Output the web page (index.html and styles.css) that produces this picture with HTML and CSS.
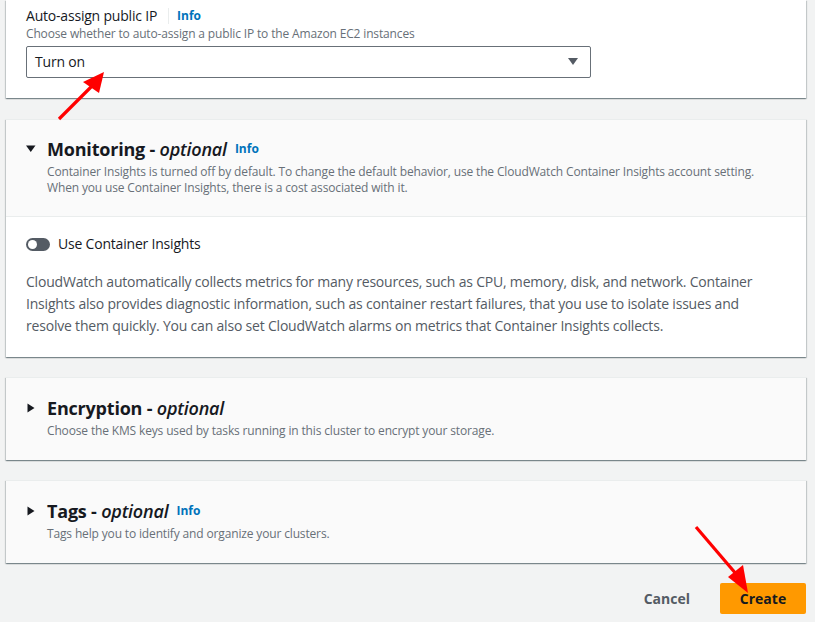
FILE: index.html
```html
<!DOCTYPE html>
<html lang="en">
<head>
<meta charset="utf-8">
<title>Create cluster</title>
<link rel="stylesheet" href="styles.css">
</head>
<body>
<div class="page">
  <section class="card card-top">
    <div class="field-label">
      <span>Auto-assign public IP</span>
      <span class="sep"></span>
      <a class="info">Info</a>
    </div>
    <div class="field-desc">Choose whether to auto-assign a public IP to the Amazon EC2 instances</div>
    <div class="select">
      <span>Turn on</span>
      <svg class="caret" width="10" height="8" viewBox="0 0 10 8"><path d="M0 0H10L5 7Z" fill="#545b64"/></svg>
    </div>
  </section>

  <section class="card">
    <header class="card-head bordered">
      <div class="title-row">
        <svg class="tri" width="10" height="8" viewBox="0 0 10 8"><path d="M0 0.5H9.5L4.75 7Z" fill="#16191f"/></svg>
        <h2 class="title">Monitoring - <i>optional</i></h2>
        <a class="info">Info</a>
      </div>
      <p class="head-desc">Container Insights is turned off by default. To change the default behavior, use the CloudWatch Container Insights account setting. When you use Container Insights, there is a cost associated with it.</p>
    </header>
    <div class="card-body">
      <div class="toggle-row">
        <span class="toggle"><span class="knob"></span></span>
        <span>Use Container Insights</span>
      </div>
      <p class="body-text">CloudWatch automatically collects metrics for many resources, such as CPU, memory, disk, and network. Container Insights also provides diagnostic information, such as container restart failures, that you use to isolate issues and resolve them quickly. You can also set CloudWatch alarms on metrics that Container Insights collects.</p>
    </div>
  </section>

  <section class="card">
    <header class="card-head collapsed">
      <div class="title-row">
        <svg class="tri" width="10" height="10" viewBox="0 0 10 10"><path d="M1.5 0.5V9.5L8.5 5Z" fill="#16191f"/></svg>
        <h2 class="title">Encryption - <i>optional</i></h2>
      </div>
      <p class="head-desc">Choose the KMS keys used by tasks running in this cluster to encrypt your storage.</p>
    </header>
  </section>

  <section class="card">
    <header class="card-head collapsed">
      <div class="title-row">
        <svg class="tri" width="10" height="10" viewBox="0 0 10 10"><path d="M1.5 0.5V9.5L8.5 5Z" fill="#16191f"/></svg>
        <h2 class="title">Tags - <i>optional</i></h2>
        <a class="info">Info</a>
      </div>
      <p class="head-desc">Tags help you to identify and organize your clusters.</p>
    </header>
  </section>

  <div class="actions">
    <button class="btn-link">Cancel</button>
    <button class="btn-primary">Create</button>
  </div>
</div>

<svg class="annotations" width="815" height="622" viewBox="0 0 815 622">
  <g stroke="#ff0000" stroke-width="3.2" stroke-linecap="butt">
    <line x1="59" y1="119" x2="92" y2="86"/>
    <line x1="696" y1="527" x2="737" y2="575"/>
  </g>
  <g fill="#ff0000">
    <path d="M104 72 L83 82 L99 93 Z"/>
    <path d="M748 593 L728 577 L743 565 Z"/>
  </g>
</svg>
</body>
</html>
```

FILE: styles.css
```css
* { box-sizing: border-box; }
html, body {
  margin: 0;
  padding: 0;
  background: #f2f3f3;
  width: 815px;
  height: 622px;
  overflow: hidden;
}
body {
  font-family: "Open Sans", "Noto Sans", Arial, sans-serif;
  color: #16191f;
  font-size: 14px;
  line-height: 20px;
  letter-spacing: -0.2px;
  position: relative;
}
.page {
  padding: 0 9px 0 6px;
  display: flex;
  flex-direction: column;
}
.card {
  background: #fafafa;
  border-top: 1px solid #eaeded;
  box-shadow: 0 1px 1px 0 rgba(0, 28, 36, 0.3), 1px 1px 1px 0 rgba(0, 28, 36, 0.15), -1px 1px 1px 0 rgba(0, 28, 36, 0.15);
  margin-bottom: 20px;
}
.card-top {
  background: #ffffff;
  border-top: none;
  padding: 6px 20px 20px 20px;
  margin-bottom: 21px;
}
.field-label {
  display: flex;
  align-items: center;
  font-size: 14px;
  line-height: 20px;
}
.sep {
  width: 1px;
  height: 16px;
  background: #eaeded;
  margin: 0 8px 0 11px;
}
.info {
  color: #0073bb;
  font-weight: 700;
  font-size: 12px;
  line-height: 16px;
  letter-spacing: 0;
}
.field-desc {
  font-size: 12px;
  line-height: 16px;
  color: #687078;
  letter-spacing: -0.15px;
}
.select {
  margin-top: 4px;
  width: 565px;
  height: 32px;
  border: 1px solid #687078;
  border-radius: 2px;
  background: #fff;
  display: flex;
  align-items: center;
  justify-content: space-between;
  padding: 0 12px 0 8px;
}
.caret { display: block; }

.card-head {
  padding: 18px 20px 20px 20px;
}
.card-head.bordered {
  border-bottom: 1px solid #eaeded;
}
.card-head.collapsed {
  padding: 19px 20px 21px 20px;
}
.title-row {
  display: flex;
  align-items: center;
}
.tri {
  display: block;
  margin-right: 11px;
}
.title {
  margin: 0;
  font-size: 18px;
  line-height: 22px;
  font-weight: 700;
  letter-spacing: -0.2px;
}
.title i { font-weight: 600; }
.title-row .info {
  margin-left: 8px;
}
.head-desc {
  margin: 4px 0 0 21px;
  font-size: 12px;
  line-height: 16px;
  color: #687078;
  letter-spacing: -0.15px;
}
.card-body {
  background: #ffffff;
  padding: 17px 20px 20px 20px;
}
.toggle-row {
  display: flex;
  align-items: center;
  gap: 8px;
}
.toggle {
  width: 24px;
  height: 13px;
  border-radius: 7px;
  background: #545b64;
  display: flex;
  align-items: center;
  padding-left: 2px;
}
.knob {
  width: 9px;
  height: 9px;
  border-radius: 50%;
  background: #fff;
}
.body-text {
  margin: 17px 0 0 0;
  font-size: 14px;
  line-height: 22px;
  color: #545b64;
}
.actions {
  display: flex;
  justify-content: flex-end;
  align-items: center;
  gap: 10px;
  margin-top: 0;
}
button {
  font-family: inherit;
  font-size: 14px;
  font-weight: 700;
  line-height: 20px;
  border: none;
  cursor: pointer;
  letter-spacing: 0;
}
.btn-link {
  background: transparent;
  color: #545b64;
  padding: 5px 20px;
}
.btn-primary {
  background: #ff9900;
  color: #16191f;
  border-radius: 2px;
  width: 86px;
  height: 31px;
  padding: 0;
}
.annotations {
  position: absolute;
  left: 0;
  top: 0;
  pointer-events: none;
}
```
